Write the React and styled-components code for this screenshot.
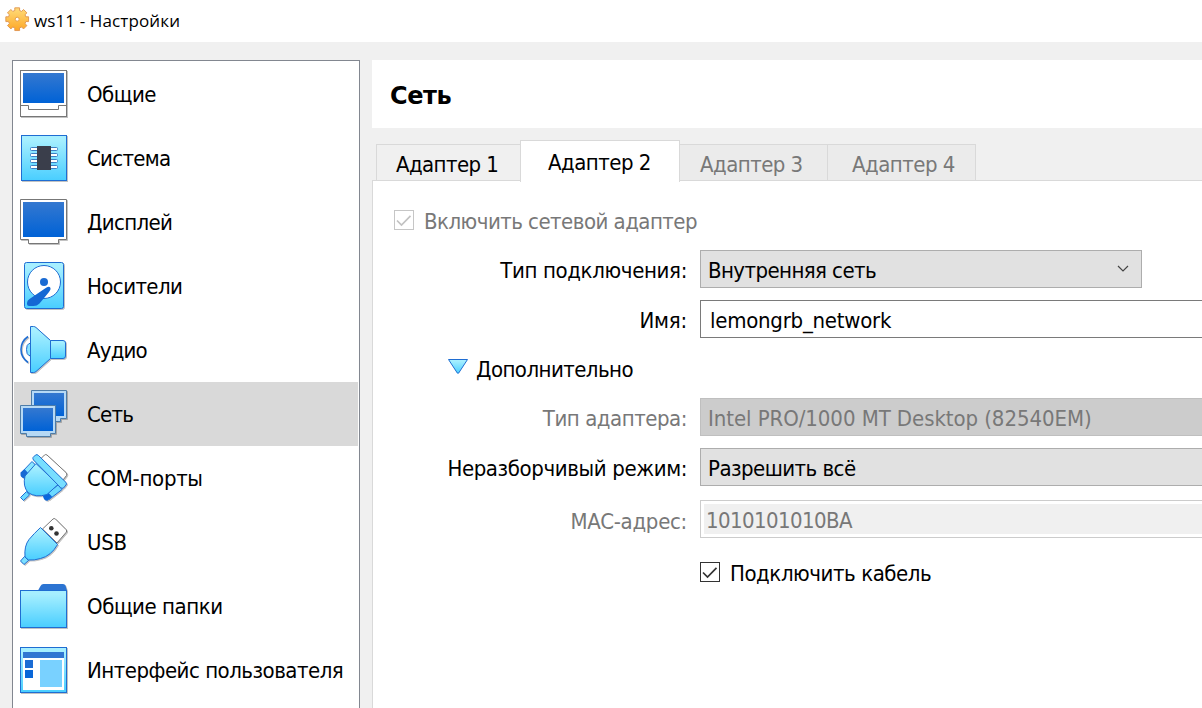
import React from "react";
import styled, { createGlobalStyle } from "styled-components";

const GlobalStyle = createGlobalStyle`
  * { box-sizing: border-box; }
  body {
    margin: 0;
    overflow: hidden;
    background: #f0f0f0;
    color: #000;
    font-family: "DejaVu Sans Condensed", "DejaVu Sans", sans-serif;
    font-size: 22px;
  }
`;

const Window = styled.div`
  display: flex;
  flex-direction: column;
  width: 1202px;
  height: 708px;
  overflow: hidden;
  background: #f0f0f0;
`;

const TitleBar = styled.header`
  display: flex;
  align-items: center;
  flex: none;
  gap: 4px;
  height: 42px;
  padding: 0 0 4px 5px;
  background: #fff;
`;

const WindowTitle = styled.span`
  font-family: "Open Sans", "Noto Sans", sans-serif;
  font-size: 17px;
  line-height: 24px;
  letter-spacing: 0.12px;
  padding-top: 4px;
`;

const Body = styled.div`
  display: flex;
  flex: 1;
  min-height: 0;
  gap: 12px;
  padding: 18px 0 0 12px;
`;

const Sidebar = styled.nav`
  flex: none;
  width: 348px;
  padding: 1px;
  border: 1px solid #828790;
  border-bottom: 0;
  background: #fff;
`;

const Text = styled.span`
  white-space: nowrap;
  line-height: 30px;
  letter-spacing: ${(p) => p.$spacing || 0}px;
`;

const NavItem = styled.div`
  display: flex;
  align-items: center;
  height: 64px;
  padding-left: 6px;
  gap: 19px;
  background: ${(p) => (p.$selected ? "#d9d9d9" : "transparent")};
  svg { flex: none; }
  ${Text} { padding-top: 2px; }
`;

const Main = styled.main`
  display: flex;
  flex-direction: column;
  flex: 1;
  min-width: 0;
`;

const PageHeader = styled.h1`
  display: flex;
  align-items: center;
  flex: none;
  height: 68px;
  margin: 0 0 12px;
  padding: 4px 0 0 18px;
  background: #fff;
  font-family: "DejaVu Sans", sans-serif;
  font-size: 24px;
  font-weight: bold;
  letter-spacing: -0.4px;
`;

const TabBar = styled.div`
  display: flex;
  align-items: flex-end;
  flex: none;
  height: 42px;
  margin-bottom: -2px;
  padding-left: 4px;
  position: relative;
  z-index: 1;
`;

const Tab = styled.div`
  display: flex;
  align-items: center;
  width: ${(p) => p.$width}px;
  height: ${(p) => (p.$active ? 42 : 36)}px;
  margin-bottom: ${(p) => (p.$active ? 0 : 2)}px;
  padding: ${(p) => (p.$active ? "3px 0 0 27px" : `4px 0 0 ${p.$indent}px`)};
  border: 1px solid #d9d9d9;
  border-width: ${(p) => (p.$active ? "1px 1px 0" : p.$first ? "1px 0 0 1px" : "1px 1px 0 0")};
  background: ${(p) => (p.$active ? "#fff" : p.$disabled ? "#ebebeb" : "#f0f0f0")};
  color: ${(p) => (p.$disabled ? "#787878" : "#000")};
`;

const Panel = styled.section`
  flex: 1;
  padding: 29px 0 0 21px;
  border: 1px solid #d9d9d9;
  border-width: 1px 0 0 1px;
  background: #fff;
`;

const CheckRow = styled.label`
  display: flex;
  align-items: flex-start;
  gap: 10px;
  height: 20px;
  color: ${(p) => (p.$disabled ? "#787878" : "#000")};
  ${Text} { margin-top: -3px; }
`;

const CheckBox = styled.span`
  flex: none;
  width: 20px;
  height: 20px;
  border: 1px solid ${(p) => (p.$disabled ? "#c6c6c6" : "#333")};
  color: ${(p) => (p.$disabled ? "#c2c2c2" : "#333")};
  svg { display: block; }
`;

const Form = styled.div`
  display: grid;
  grid-template-columns: 293px 1fr;
  column-gap: 13px;
  grid-template-rows: 38px 38px 36px 38px 38px 40px 20px;
  row-gap: 12px;
  margin-top: 20px;
`;

const FieldLabel = styled.div`
  display: flex;
  justify-content: flex-end;
  align-items: center;
  padding-top: ${(p) => p.$drop}px;
  color: ${(p) => (p.$disabled ? "#787878" : "#000")};
`;

const Expander = styled.div`
  display: flex;
  grid-column: 1 / -1;
  align-items: center;
  gap: 7px;
  padding-left: 53px;
  svg { margin-top: -3px; }
  ${Text} { margin-top: 4px; }
`;

const ComboBox = styled.div`
  display: flex;
  align-items: center;
  justify-content: space-between;
  width: ${(p) => p.$width || "auto"};
  padding: 3px 12px 0 7px;
  border: 1px solid ${(p) => (p.$disabled ? "#bfbfbf" : "#adadad")};
  border-right-width: ${(p) => (p.$width ? 1 : 0)}px;
  background: ${(p) => (p.$disabled ? "#ccc" : "#e1e1e1")};
  color: ${(p) => (p.$disabled ? "#787878" : "#000")};
  svg { margin-top: -4px; }
`;

const LineEdit = styled.div`
  display: flex;
  margin-top: ${(p) => (p.$disabled ? 2 : 0)}px;
  padding: ${(p) => (p.$disabled ? "3px 0 3px 3px" : "0 0 0 7px")};
  border: 1px solid ${(p) => (p.$disabled ? "#ccc" : "#7a7a7a")};
  border-right: 0;
  background: #fff;
  color: ${(p) => (p.$disabled ? "#787878" : "#000")};
`;

const EditValue = styled.div`
  display: flex;
  align-items: center;
  flex: 1;
  padding: ${(p) => (p.$disabled ? "3px 0 0 2px" : "3px 0 0 2px")};
  background: ${(p) => (p.$disabled ? "#f0f0f0" : "#fff")};
`;

const CableCell = styled.div`
  grid-column: 2;
  margin-top: 12px;
`;

const BLUE = "url(#screenBlue)";
const CYAN = "url(#bodyCyan)";
const EDGE = "#1f6dd2";

const HiddenDefs = styled.svg`
  position: absolute;
`;

const Gradients = () => (
  <HiddenDefs width="0" height="0">
    <defs>
      <linearGradient id="screenBlue" x1="0" y1="0" x2="0" y2="1">
        <stop offset="0" stopColor="#3478d0" />
        <stop offset="1" stopColor="#0062d6" />
      </linearGradient>
      <linearGradient id="bodyCyan" x1="0" y1="0" x2="0" y2="1">
        <stop offset="0.1" stopColor="#a6efff" />
        <stop offset="1" stopColor="#49ceff" />
      </linearGradient>
      <linearGradient id="gearGold" x1="0" y1="0" x2="0" y2="1">
        <stop offset="0" stopColor="#ffdc7a" />
        <stop offset="1" stopColor="#fda726" />
      </linearGradient>
    </defs>
  </HiddenDefs>
);

const Icon = styled.svg.attrs({ width: 49, height: 49, viewBox: "0 0 49 49", fill: "none" })`
  display: block;
  overflow: visible;
  margin-right: -1px;
  filter: drop-shadow(1px 1px 0 rgba(0, 0, 0, 0.24));
`;

const GeneralIcon = () => (
  <Icon>
    <rect x="0.5" y="0.5" width="46" height="46" fill="#fff" stroke="#777" />
    <rect x="3" y="3" width="41" height="30" fill={BLUE} />
    <path d="M.5 35.5h8v4h30v-4h8" stroke="#777" />
  </Icon>
);

const SystemIcon = () => (
  <Icon>
    <rect x="1.5" y="1.5" width="45" height="45" fill={CYAN} stroke={EDGE} />
    {[13, 19, 25, 31].map((y) => (
      <rect key={y} x="10.5" y={y + 0.5} width="27" height="3" rx="1" fill="#fff" stroke="#3b7fc4" />
    ))}
    <rect x="17" y="12" width="14" height="24" fill="#3a3e4b" />
  </Icon>
);

const DisplayIcon = () => (
  <Icon>
    <path d="M.5 1.5h46v40h-8v4h-30v-4h-8z" fill="#fff" stroke="#777" />
    <rect x="3" y="4" width="41" height="35" fill={BLUE} />
  </Icon>
);

const StorageIcon = () => (
  <Icon>
    <rect x="4.5" y="0.5" width="39" height="46" rx="2" fill={CYAN} stroke={EDGE} />
    <circle cx="24" cy="20" r="16.5" fill="#fff" stroke={EDGE} />
    <circle cx="24" cy="20" r="4" fill="#1b6bd3" />
    <path d="M25 26.500Q29 23.500 30.500 26Q31 27.500 29 30L19.500 41.500Q17 44 13.500 44H9Q7 44 7 42V41Q7 38.500 9.500 37z" fill="#1468d4" />
  </Icon>
);

const AudioIcon = () => (
  <Icon>
    <path d="M10.500 17.500H9q-2.500 1-2.500 6t2.500 6h1.500z" fill="#8ae4ff" stroke={EDGE} />
    <path d="M8 10.500Q1 15.500 1 23.500t7 13" stroke={EDGE} strokeWidth="1.600" />
    <path d="M30.500 14.500H43q2.500 0 2.500 2.500V30q0 2.500-2.500 2.500H30.500z" fill={CYAN} stroke={EDGE} />
    <path d="M10.500.5h3q1.500 0 2.500 1L30.500 14.500v18L16 45.500q-1 1-2.500 1h-3z" fill={CYAN} stroke={EDGE} />
  </Icon>
);

const NetworkIcon = () => (
  <Icon>
    <path d="M11.500.5h35v28h-6v3h-23v-3h-6z" fill="#b6d9f5" stroke="#4d7ca8" />
    <rect x="14" y="3" width="30" height="23" fill={BLUE} />
    <path d="M.5 15.500h35v28h-5v3h-24v-3h-6z" fill="#b6d9f5" stroke="#4d7ca8" />
    <rect x="3" y="18" width="30" height="23" fill={BLUE} />
  </Icon>
);

const SerialIcon = () => (
  <Icon>
    <path d="M21 4.500L24.500 1Q25.700 0 27 1L46 18.500Q47.500 20 46.500 21.500L43 26z" fill="#fff" stroke="#777" />
    <path d="M9.500 41L6.500 37.500L.5 43.500L3.500 46.500z" fill="#6bd9ff" stroke={EDGE} />
    <path d="M2.500 17.500L12 7.500L16.500 12L7 22.500z" fill="#8ae6ff" stroke={EDGE} />
    <path d="M.5 18.500L4.500 15L9 20L4.500 24.500Q0 23 .5 20z" fill="#1769d4" />
    <path d="M38 31L42 35.500L29 45.500L25 41z" fill="#6bd9ff" stroke={EDGE} />
    <path d="M23 42L27.500 38L32 42.500L27.500 46.800Q23.500 46.500 23 42z" fill="#0966dc" />
    <path d="M16 9.500L5 22Q2.500 32 8 38.500Q16 44 27 40.500L38 30.500z" fill={CYAN} stroke={EDGE} />
    <path d="M13 3.500L15.500 1Q17 0 18.500 1.500L46 28.500Q47 30 46 31L43.500 34Q42 35 40.500 33.500L13.500 6Q12.500 4.500 13 3.500z" fill="#78deff" stroke={EDGE} />
  </Icon>
);

const UsbIcon = () => (
  <Icon>
    <path d="M22.500 11L33 1Q34 0 35.500 1L46 11.500Q47.500 13 46 14.500L37 25z" fill="#fff" stroke="#777" />
    <circle cx="31.300" cy="10.300" r="2.300" fill="#333" />
    <circle cx="36.500" cy="15.500" r="2.300" fill="#333" />
    <path d="M4.500 38.500L.5 43L4 46.500L8.500 42.500z" fill="#7be0ff" stroke={EDGE} />
    <path d="M20.500 9.500L37.500 26.500Q31 38 20.500 40.500Q14 42.500 8.500 42L5 39Q4 28 9 21.500Q14 15.500 20.500 9.500z" fill={CYAN} stroke={EDGE} />
  </Icon>
);

const FoldersIcon = () => (
  <Icon>
    <path d="M18 8.500L20.500 4Q21.500 2 23.500 2H43Q45 2 45.500 3.500L47 8.500z" fill="#2c74d2" />
    <rect x="0.5" y="8.500" width="46" height="37" fill={CYAN} stroke={EDGE} />
  </Icon>
);

const InterfaceIcon = () => (
  <Icon>
    <rect x="0.5" y="1.500" width="46" height="45" fill={CYAN} stroke={EDGE} />
    <rect x="3" y="6" width="41" height="6" fill="#3176d2" />
    <rect x="3" y="12" width="41" height="32" fill="#fff" />
    <rect x="5" y="14" width="8" height="8" fill="#1b6cd4" />
    <rect x="5" y="24" width="8" height="8" fill="#0966d8" />
    <rect x="20" y="14" width="22" height="27" fill="#79d1ff" />
  </Icon>
);

const toothAngles = [0, 45, 90, 135, 180, 225, 270, 315];
const polar = (radius, deg) => {
  const a = (deg * Math.PI) / 180;
  return `${(12.2 + radius * Math.cos(a)).toFixed(2)} ${(12.2 + radius * Math.sin(a)).toFixed(2)}`;
};
const gearOutline = `M${toothAngles
  .map((t) => [polar(9, t - 15), polar(11.6, t - 12), polar(11.6, t + 12), polar(9, t + 15)].join("L"))
  .join("L")}z`;

const GearIcon = () => (
  <svg width="25" height="25" viewBox="0 0 25 25">
    <path d={gearOutline} fill="url(#gearGold)" stroke="#e39a55" strokeLinejoin="round" />
    <circle cx="12.200" cy="12.200" r="2" fill="#fff" stroke="#e6a04a" />
  </svg>
);

const CheckMark = () => (
  <svg width="18" height="18" viewBox="0 0 18 18" fill="none">
    <path d="M2 9.500L6.500 14L15.500 4.800" stroke="currentColor" strokeWidth="1.700" />
  </svg>
);

const sections = [
  { name: "Общие", Glyph: GeneralIcon, spacing: -0.5 },
  { name: "Система", Glyph: SystemIcon, spacing: -0.72 },
  { name: "Дисплей", Glyph: DisplayIcon, spacing: -0.66 },
  { name: "Носители", Glyph: StorageIcon, spacing: -0.58 },
  { name: "Аудио", Glyph: AudioIcon, spacing: -0.8 },
  { name: "Сеть", Glyph: NetworkIcon, spacing: -0.75, selected: true },
  { name: "COM-порты", Glyph: SerialIcon, spacing: -0.3 },
  { name: "USB", Glyph: UsbIcon, spacing: -0.3 },
  { name: "Общие папки", Glyph: FoldersIcon, spacing: -0.45 },
  { name: "Интерфейс пользователя", Glyph: InterfaceIcon, spacing: -0.5 },
];

export default function App() {
  return (
    <Window>
      <GlobalStyle />
      <Gradients />
      <TitleBar>
        <GearIcon />
        <WindowTitle>ws11 - Настройки</WindowTitle>
      </TitleBar>
      <Body>
        <Sidebar>
          {sections.map(({ name, Glyph, spacing, selected }) => (
            <NavItem key={name} $selected={selected}>
              <Glyph />
              <Text $spacing={spacing}>{name}</Text>
            </NavItem>
          ))}
        </Sidebar>
        <Main>
          <PageHeader>Сеть</PageHeader>
          <TabBar>
            <Tab $width={144} $first $indent={19}><Text $spacing={-0.58}>Адаптер 1</Text></Tab>
            <Tab $width={160} $active><Text $spacing={-0.5}>Адаптер 2</Text></Tab>
            <Tab $width={148} $disabled $indent={20}><Text $spacing={-0.53}>Адаптер 3</Text></Tab>
            <Tab $width={148} $disabled $indent={24}><Text $spacing={-0.5}>Адаптер 4</Text></Tab>
          </TabBar>
          <Panel>
            <CheckRow $disabled>
              <CheckBox $disabled><CheckMark /></CheckBox>
              <Text $spacing={-0.53}>Включить сетевой адаптер</Text>
            </CheckRow>
            <Form>
              <FieldLabel $drop={3}><Text $spacing={-0.35}>Тип подключения:</Text></FieldLabel>
              <ComboBox $width="442px">
                <Text $spacing={-0.58}>Внутренняя сеть</Text>
                <svg width="12" height="8" viewBox="0 0 12 8" fill="none">
                  <path d="M1 1L6 6L11 1" stroke="#444" strokeWidth="1.200" />
                </svg>
              </ComboBox>
              <FieldLabel $drop={3}><Text $spacing={-0.21}>Имя:</Text></FieldLabel>
              <LineEdit><EditValue><Text $spacing={-0.25}>lemongrb_network</Text></EditValue></LineEdit>
              <Expander>
                <svg width="22" height="17" viewBox="0 0 22 17">
                  <path d="M1.500 1.500h19L11.700 15q-.7 1-1.400 0z" fill={CYAN} stroke={EDGE} />
                </svg>
                <Text $spacing={-0.55}>Дополнительно</Text>
              </Expander>
              <FieldLabel $disabled $drop={3}><Text $spacing={-0.46}>Тип адаптера:</Text></FieldLabel>
              <ComboBox $disabled><Text $spacing={-0.07}>Intel PRO/1000 MT Desktop (82540EM)</Text></ComboBox>
              <FieldLabel $drop={3}><Text $spacing={-0.38}>Неразборчивый режим:</Text></FieldLabel>
              <ComboBox><Text $spacing={-0.53}>Разрешить всё</Text></ComboBox>
              <FieldLabel $disabled $drop={7}><Text $spacing={-0.29}>MAC-адрес:</Text></FieldLabel>
              <LineEdit $disabled><EditValue $disabled><Text $spacing={-0.6}>1010101010BA</Text></EditValue></LineEdit>
              <CableCell>
                <CheckRow>
                  <CheckBox><CheckMark /></CheckBox>
                  <Text $spacing={-0.44}>Подключить кабель</Text>
                </CheckRow>
              </CableCell>
            </Form>
          </Panel>
        </Main>
      </Body>
    </Window>
  );
}
